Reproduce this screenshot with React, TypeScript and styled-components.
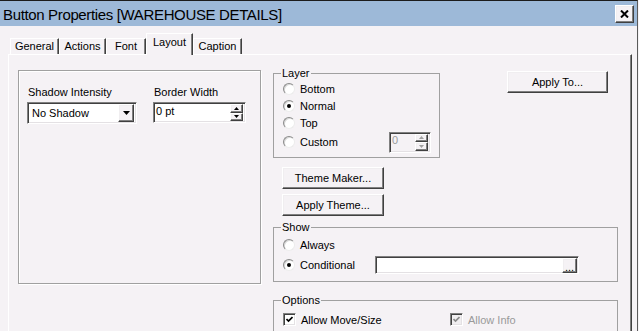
import * as React from 'react';
import styled, {createGlobalStyle} from 'styled-components';

const GlobalStyle = createGlobalStyle`
  *, *::before, *::after { box-sizing: border-box; }
  html, body { margin: 0; padding: 0; overflow: hidden; background: #f5f2f5; }
  body { font-family: "Liberation Sans", Arial, sans-serif; font-size: 11px; color: #000; }
`;

const raised = `
  border: 1px solid;
  border-color: #ffffff #404040 #404040 #ffffff;
  box-shadow: inset -1px -1px 0 #808080, inset 1px 1px 0 #f0eef0;
`;

const sunken = `
  border: 1px solid;
  border-color: #808080 #ffffff #ffffff #808080;
  box-shadow: inset 1px 1px 0 #404040, inset -1px -1px 0 #e4e1e4;
`;

const tabs = ['General', 'Actions', 'Font', 'Layout', 'Caption'];
const tabWidths = [49, 47, 40, 47, 49];

export default function App() {
    return <>
        <GlobalStyle/>
        <Window>
            <TitleBar>
                <Title>Button Properties [WAREHOUSE DETAILS]</Title>
                <CloseButton type="button">
                    <svg width="9" height="8" viewBox="0 0 9 8">
                        <path d="M1 0.5 L8 7.5 M8 0.5 L1 7.5" stroke="#000" strokeWidth="2"/>
                    </svg>
                </CloseButton>
            </TitleBar>
            <Client>
                <TabStrip>
                    {tabs.map((t, i) => <Tab key={t} $active={t === 'Layout'} $width={tabWidths[i]}>{t}</Tab>)}
                </TabStrip>
                <Panel>
                    <LeftGroup>
                        <FieldColumn>
                            <FieldLabel>Shadow Intensity</FieldLabel>
                            <Combo>
                                <span>No Shadow</span>
                                <DropButton>
                                    <svg width="7" height="4" viewBox="0 0 7 4"><path d="M0 0 H7 L3.5 4 Z" fill="#000"/></svg>
                                </DropButton>
                            </Combo>
                        </FieldColumn>
                        <FieldColumn>
                            <FieldLabel>Border Width</FieldLabel>
                            <Spin $width={93}>
                                <SpinText>0 pt</SpinText>
                                <SpinButtons/>
                            </Spin>
                        </FieldColumn>
                    </LeftGroup>

                    <RightColumn>
                        <TopRow>
                            <Group $width={167} $pad="0 8px 4px 9px">
                                <Legend>Layer</Legend>
                                <Radio label="Bottom"/>
                                <Radio label="Normal" checked/>
                                <Radio label="Top"/>
                                <OptionRow $height={22} $spread>
                                    <RadioInner label="Custom"/>
                                    <Spin $width={42} $disabled>
                                        <SpinText>0</SpinText>
                                        <SpinButtons disabled/>
                                    </Spin>
                                </OptionRow>
                            </Group>
                            <PushButton type="button" $width={101} style={{marginLeft: 67, marginTop: 4}}>Apply To...</PushButton>
                        </TopRow>

                        <ThemeButtons>
                            <PushButton type="button" $width={102}>Theme Maker...</PushButton>
                            <PushButton type="button" $width={102}>Apply Theme...</PushButton>
                        </ThemeButtons>

                        <Group $width={345} $pad="2px 8px 5px 9px" $gap={5}>
                            <Legend>Show</Legend>
                            <Radio label="Always" height={18}/>
                            <OptionRow $height={22}>
                                <RadioInner label="Conditional" checked width={92}/>
                                <TextField>
                                    <EllipsisButton type="button">...</EllipsisButton>
                                </TextField>
                            </OptionRow>
                        </Group>

                        <Group $width={345} $pad="4px 8px 6px 9px" $gap={12}>
                            <Legend>Options</Legend>
                            <OptionRow $height={17}>
                                <Check label="Allow Move/Size" checked width={167}/>
                                <Check label="Allow Info" checked disabled/>
                            </OptionRow>
                        </Group>
                    </RightColumn>
                </Panel>
            </Client>
        </Window>
    </>;
}

function RadioInner({label, checked, width}: { label: string; checked?: boolean; width?: number }) {
    return <OptionLabel $width={width}>
        <RadioCircle>{checked && <RadioDot/>}</RadioCircle>
        <span>{label}</span>
    </OptionLabel>;
}

function Radio({label, checked, height = 17}: { label: string; checked?: boolean; height?: number }) {
    return <OptionRow $height={height}>
        <RadioInner label={label} checked={checked}/>
    </OptionRow>;
}

function Check({label, checked, disabled, width}: { label: string; checked?: boolean; disabled?: boolean; width?: number }) {
    return <OptionLabel $width={width} $disabled={disabled}>
        <CheckBox $disabled={disabled}>
            {checked && <svg width="7" height="7" viewBox="0 0 7 7">
                <path d="M0.5 3 L2.5 5 L6.5 1" stroke={disabled ? '#8a8a8a' : '#000'} strokeWidth="1.7" fill="none"/>
            </svg>}
        </CheckBox>
        <span>{label}</span>
    </OptionLabel>;
}

function SpinButtons({disabled}: { disabled?: boolean }) {
    const c = disabled ? '#a0a0a0' : '#000';
    return <SpinStack>
        <SpinArrow><svg width="5" height="3" viewBox="0 0 5 3"><path d="M0 3 H5 L2.5 0 Z" fill={c}/></svg></SpinArrow>
        <SpinArrow><svg width="5" height="3" viewBox="0 0 5 3"><path d="M0 0 H5 L2.5 3 Z" fill={c}/></svg></SpinArrow>
    </SpinStack>;
}

const Window = styled.div`
  width: 638px;
  height: 331px;
  border-top: 1px solid #1c1c1c;
  border-right: 1px solid #5a5a5a;
  display: flex;
  flex-direction: column;
  overflow: hidden;
  background: #f5f2f5;
`;

const TitleBar = styled.div`
  height: 25px;
  flex: none;
  background: #9db9d8;
  display: flex;
  align-items: center;
  justify-content: space-between;
  padding: 0 3px 0 3px;
`;

const Title = styled.div`
  font-size: 15px;
  letter-spacing: -0.35px;
  padding-top: 2px;
  white-space: nowrap;
`;

const CloseButton = styled.button`
  ${raised};
  width: 19px;
  height: 18px;
  padding: 0;
  margin-top: 1px;
  background: #f5f2f5;
  display: flex;
  align-items: center;
  justify-content: center;
`;

const Client = styled.div`
  flex: 1;
  padding: 0 5px 0 8px;
  display: flex;
  flex-direction: column;
`;

const TabStrip = styled.div`
  height: 28px;
  flex: none;
  display: flex;
  align-items: flex-end;
  padding-left: 2px;
`;

const Tab = styled.div<{ $active?: boolean; $width: number }>`
  position: relative;
  z-index: ${p => (p.$active ? 1 : 0)};
  width: ${p => p.$width}px;
  height: ${p => (p.$active ? 22 : 16)}px;
  margin-bottom: ${p => (p.$active ? -1 : 0)}px;
  padding-top: ${p => (p.$active ? 2 : 1)}px;
  background: #f5f2f5;
  border-top: 1px solid #ffffff;
  border-left: 1px solid #ffffff;
  border-right: 1px solid #404040;
  box-shadow: inset -1px 0 0 #808080;
  text-align: center;
  line-height: 13px;
  white-space: nowrap;
`;

const Panel = styled.div`
  height: 300px;
  border-top: 1px solid #ffffff;
  border-left: 1px solid #ffffff;
  border-right: 1px solid #404040;
  box-shadow: inset -1px 0 0 #808080;
  display: flex;
  align-items: flex-start;
  gap: 12px;
  padding: 12px 0 0 9px;
`;

const LeftGroup = styled.div`
  width: 243px;
  height: 214px;
  margin-top: 3px;
  border: 1px solid #a0a0a0;
  box-shadow: 1px 1px 0 #ffffff, inset 1px 1px 0 #ffffff;
  display: flex;
  align-items: flex-start;
  gap: 16px;
  padding: 14px 0 0 8px;
`;

const FieldColumn = styled.div`
  display: flex;
  flex-direction: column;
`;

const FieldLabel = styled.div`
  line-height: 14px;
  margin: 0 0 3px 1px;
  white-space: nowrap;
`;

const Combo = styled.div`
  ${sunken};
  width: 110px;
  height: 22px;
  background: #ffffff;
  display: flex;
  align-items: center;
  padding: 0 2px 0 4px;
  justify-content: space-between;
`;

const DropButton = styled.div`
  ${raised};
  width: 16px;
  height: 18px;
  background: #f5f2f5;
  display: flex;
  align-items: center;
  justify-content: center;
`;

const Spin = styled.div<{ $width: number; $disabled?: boolean }>`
  ${sunken};
  width: ${p => p.$width}px;
  height: 21px;
  background: ${p => (p.$disabled ? '#f5f2f5' : '#ffffff')};
  color: ${p => (p.$disabled ? '#9a9a9a' : '#000')};
  display: flex;
  align-items: center;
  justify-content: space-between;
  padding: 0 2px 0 2px;
`;

const SpinText = styled.span`
  line-height: 13px;
  margin-top: -3px;
`;

const SpinStack = styled.div`
  display: flex;
  flex-direction: column;
  height: 17px;
`;

const SpinArrow = styled.div`
  ${raised};
  width: 13px;
  flex: 1;
  background: #f5f2f5;
  display: flex;
  align-items: center;
  justify-content: center;
`;

const RightColumn = styled.div`
  width: 345px;
  display: flex;
  flex-direction: column;
  align-items: flex-start;
`;

const TopRow = styled.div`
  display: flex;
  align-items: flex-start;
`;

const Group = styled.fieldset<{ $width: number; $pad: string; $gap?: number }>`
  width: ${p => p.$width}px;
  margin: ${p => p.$gap ?? 0}px 0 0 0;
  padding: ${p => p.$pad};
  border: 1px solid #a0a0a0;
  min-width: 0;
`;

const Legend = styled.legend`
  line-height: 13px;
  padding: 0 1px;
  margin-left: -2px;
`;

const OptionRow = styled.div<{ $height: number; $spread?: boolean }>`
  height: ${p => p.$height}px;
  display: flex;
  align-items: center;
  justify-content: ${p => (p.$spread ? 'space-between' : 'flex-start')};
`;

const OptionLabel = styled.label<{ $width?: number; $disabled?: boolean }>`
  display: flex;
  align-items: center;
  gap: 5px;
  width: ${p => (p.$width ? `${p.$width}px` : 'auto')};
  flex: none;
  color: ${p => (p.$disabled ? '#9a9a9a' : '#000')};
  white-space: nowrap;
`;

const RadioCircle = styled.span`
  width: 12px;
  height: 12px;
  border-radius: 50%;
  border: 1px solid;
  border-color: #8a8a8a #ececec #ececec #8a8a8a;
  background: #ffffff;
  box-shadow: inset 1px 1px 0 #d8d8d8;
  display: flex;
  align-items: center;
  justify-content: center;
`;

const RadioDot = styled.span`
  width: 4px;
  height: 4px;
  border-radius: 50%;
  background: #000;
`;

const CheckBox = styled.span<{ $disabled?: boolean }>`
  ${sunken};
  width: 13px;
  height: 13px;
  background: ${p => (p.$disabled ? '#f0eef0' : '#ffffff')};
  display: flex;
  align-items: center;
  justify-content: center;
`;

const ThemeButtons = styled.div`
  display: flex;
  flex-direction: column;
  gap: 5px;
  margin: 9px 0 0 9px;
`;

const PushButton = styled.button<{ $width: number }>`
  ${raised};
  width: ${p => p.$width}px;
  height: 22px;
  padding: 0;
  background: #f5f2f5;
  font-family: inherit;
  font-size: 11px;
  color: #000;
`;

const TextField = styled.div`
  ${sunken};
  width: 204px;
  height: 18px;
  background: #ffffff;
  display: flex;
  justify-content: flex-end;
  align-items: center;
  padding-right: 1px;
`;

const EllipsisButton = styled.button`
  ${raised};
  width: 15px;
  height: 15px;
  padding: 0;
  background: #f5f2f5;
  font-family: inherit;
  font-size: 11px;
  line-height: 9px;
  color: #000;
  display: flex;
  align-items: flex-end;
  justify-content: center;
`;
